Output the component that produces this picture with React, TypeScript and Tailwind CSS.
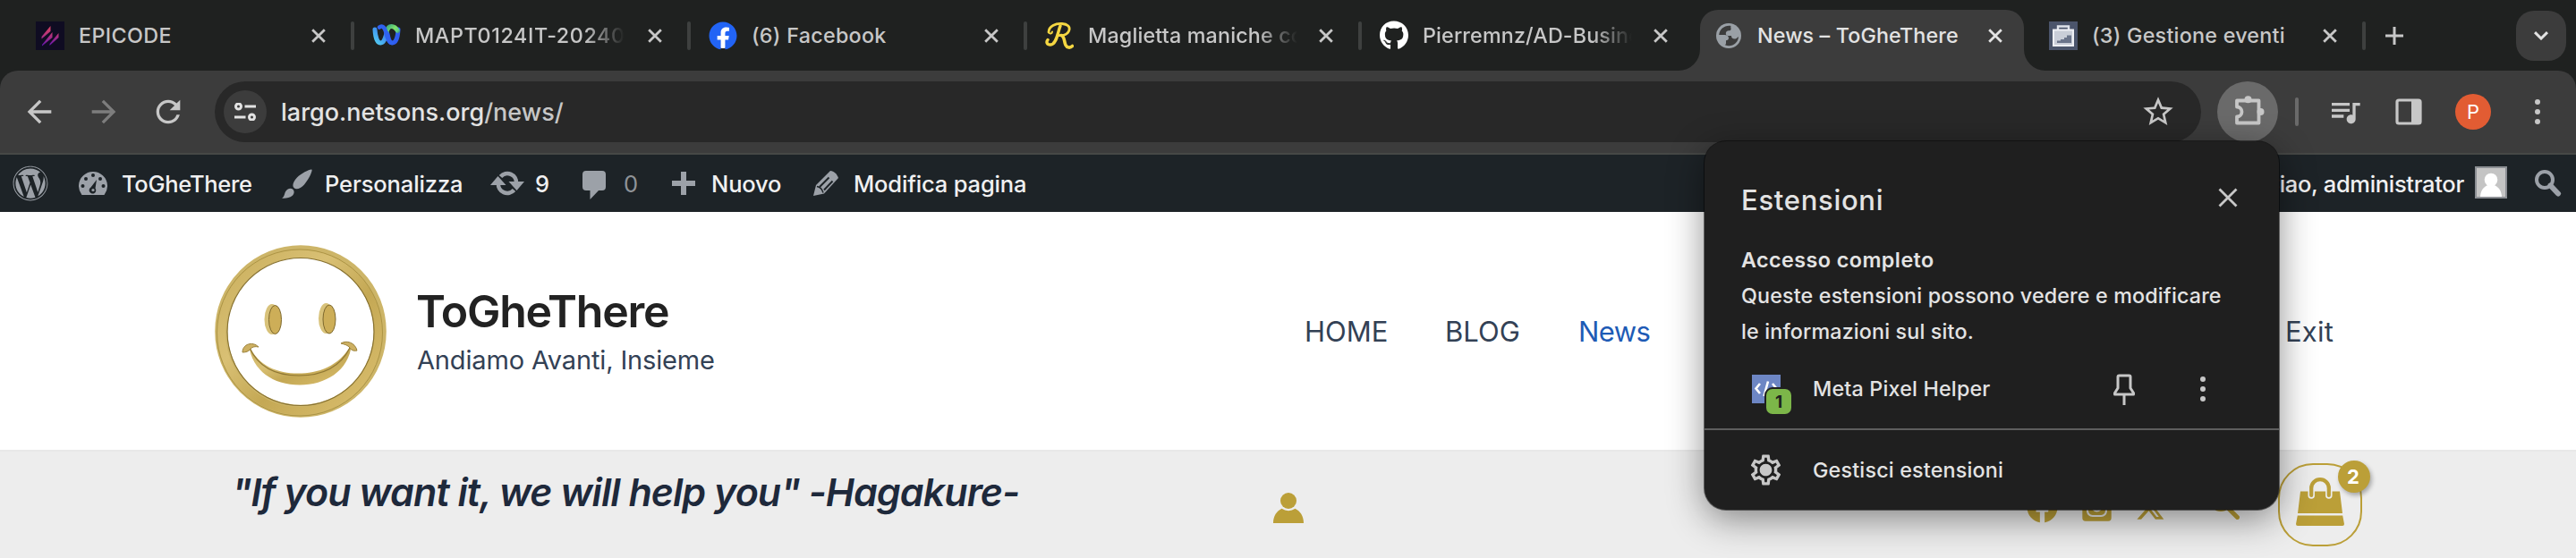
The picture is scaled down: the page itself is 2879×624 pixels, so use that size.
import React from "react";
import { FaFacebook, FaGithub, FaWordpress, FaInstagramSquare } from "react-icons/fa";
import { FaXTwitter } from "react-icons/fa6";
import {
  MdArrowBack,
  MdArrowForward,
  MdRefresh,
  MdStarOutline,
  MdQueueMusic,
  MdOutlineSettings,
} from "react-icons/md";

type IconProps = { className?: string };

const CloseIcon = ({ className }: IconProps) => (
  <svg viewBox="0 0 16 16" className={className} fill="none" stroke="currentColor" strokeWidth="2.8">
    <path d="M1.2 1.2 14.8 14.8M14.8 1.2 1.2 14.8" />
  </svg>
);

const DotsIcon = ({ className }: IconProps) => (
  <svg viewBox="0 0 8 30" className={className} fill="currentColor">
    <circle cx="4" cy="4" r="3" />
    <circle cx="4" cy="15" r="3" />
    <circle cx="4" cy="26" r="3" />
  </svg>
);

const EpicodeIcon = () => (
  <svg viewBox="0 0 32 32" className="size-8">
    <defs>
      <linearGradient id="epi" x1="0" y1="28" x2="0" y2="4" gradientUnits="userSpaceOnUse">
        <stop offset="0" stopColor="#5a12b0" />
        <stop offset="0.5" stopColor="#b0317f" />
        <stop offset="1" stopColor="#e0455c" />
      </linearGradient>
    </defs>
    <rect width="32" height="32" fill="#0f0c22" />
    <path d="M6.5 17 16.500 5v6L6.500 19.500zM7 26 18.500 12v6L7 27.500zM15.500 25 25.500 13v5L15.500 27z" fill="url(#epi)" />
  </svg>
);

const WebexIcon = () => (
  <svg viewBox="0 0 32 32" className="size-8" fill="none" strokeLinecap="round">
    <defs>
      <linearGradient id="wbl" x1="2" y1="20" x2="16" y2="6" gradientUnits="userSpaceOnUse">
        <stop offset="0" stopColor="#4fc3f0" />
        <stop offset="0.55" stopColor="#3f8df0" />
        <stop offset="1" stopColor="#2457e0" />
      </linearGradient>
      <linearGradient id="wbr" x1="18" y1="4" x2="30" y2="16" gradientUnits="userSpaceOnUse">
        <stop offset="0" stopColor="#3fae7f" />
        <stop offset="0.45" stopColor="#7fe36b" />
        <stop offset="0.7" stopColor="#5fcf80" />
        <stop offset="1" stopColor="#1f3fb0" />
      </linearGradient>
    </defs>
    <path d="M29 9c-.5 10-3 15-6.500 15S18 19 17 14" stroke="#2f5df0" strokeWidth="5" />
    <path d="M16 12c1-4.500 3-6.500 5.500-6.500S27 8 28.500 10.500" stroke="url(#wbr)" strokeWidth="5" />
    <path d="M3 9c.5 9 3 15 6.500 15s5-5 6.500-11" stroke="url(#wbl)" strokeWidth="5" />
    <path d="M8 6.500c2.500-2 5.500-1 7 4.500s3 13 7 13" stroke="#2f62f0" strokeWidth="4.600" />
  </svg>
);

const ScriptLogo = () => (
  <svg viewBox="0 0 32 32" className="size-8" fill="none" stroke="#f5d742" strokeLinecap="round">
    <path d="M17 5C14 12 13 26 6 26c-4 0-5-3-3-5.500" strokeWidth="3.400" />
    <path d="M4 12C4 5 12 2 19 2.500c6 .5 9 3 8 7C26 14 21 16 15 15.500" strokeWidth="2.800" />
    <path d="M18 15.500c4 1 3 7 5 11 1.500 3 5 3.500 7.500 1" strokeWidth="3.600" />
    <path d="M4 12c1 2.500 4 1.500 4-.5" strokeWidth="2" />
  </svg>
);

const GlobeIcon = () => (
  <svg viewBox="0 0 28 28" className="ml-0.5 size-7">
    <circle cx="14" cy="14" r="14" fill="#9aa0a6" />
    <path
      d="M16.500 3C9.500 2 4 6.500 3.200 13h6.300c3 0 4.500 1.500 4.500 4-.1 1.200-1.300 2-3 2.200V22c0 1.500-.6 2-1.200 2.300 7.500 3 15-2 15.200-9.300-1.500.8-2 2.500-4 2.500-3 0-4-1.500-4-3.500h-4.500c-2-.5-2.500-4.500.3-5.500 1.500-.5 3 .2 3.700-1.500.4-1.500-.7-2.500 0-4z"
      fill="#3c3c3c"
    />
  </svg>
);

const BriefcaseIcon = () => (
  <svg viewBox="0 0 32 32" className="size-8">
    <rect width="32" height="32" fill="#4b556b" />
    <path d="M10 10V5.500h12V10" fill="none" stroke="#dfe3ea" strokeWidth="2.400" />
    <rect x="5" y="9.500" width="22" height="17.500" fill="#c9ced8" stroke="#eef0f4" strokeWidth="2" />
    <path d="M9 24v-2.500h4v-1.500h4v-2h3v-2.500h5v8.500z" fill="#6a748a" />
  </svg>
);

type TabData = {
  title: string;
  icon: React.ReactNode;
  width: string;
  spacing: string;
  active?: boolean;
  fade?: boolean;
  separator?: boolean;
};

const tabs: TabData[] = [
  { title: "EPICODE", icon: <EpicodeIcon />, width: "w-[376px]", spacing: "tracking-[0.4px]" },
  { title: "MAPT0124IT-20240", icon: <WebexIcon />, width: "w-[376px]", spacing: "tracking-[0.6px]", fade: true, separator: true },
  {
    title: "(6) Facebook",
    icon: (
      <span className="flex size-8 items-center justify-center rounded-full bg-[radial-gradient(circle,white_60%,transparent_62%)]">
        <FaFacebook className="size-8 text-[#2264f5]" />
      </span>
    ),
    width: "w-[376px]",
    spacing: "tracking-[0.28px]",
    separator: true,
  },
  { title: "Maglietta maniche co", icon: <ScriptLogo />, width: "w-[374px]", spacing: "tracking-[0.16px]", fade: true, separator: true },
  { title: "Pierremnz/AD-Busine", icon: <FaGithub className="size-[33px] text-white" />, width: "w-[374px]", spacing: "tracking-[0.14px]", fade: true, separator: true },
  { title: "News – ToGheThere", icon: <GlobeIcon />, width: "w-[374px]", spacing: "tracking-[0.12px]", active: true },
  { title: "(3) Gestione eventi", icon: <BriefcaseIcon />, width: "w-[374px]", spacing: "tracking-[0.25px]" },
];

function Tab({ tab }: { tab: TabData }) {
  return (
    <div className={`relative flex h-full shrink-0 items-center ${tab.width}`}>
      {tab.active && (
        <svg viewBox="0 0 410 68" className="absolute bottom-0 -left-4 h-[68px] w-[410px]" fill="#3c3c3c">
          <path d="M0 68a24 24 0 0 0 24-24V20A20 20 0 0 1 44 0H366a20 20 0 0 1 20 20V44a24 24 0 0 0 24 24z" />
        </svg>
      )}
      <div className={`h-8 w-1 rounded-sm ${tab.separator ? "bg-[#3e403f]" : ""}`} />
      <div className="relative ml-5 flex w-8 shrink-0 items-center">{tab.icon}</div>
      <div
        className={`relative ml-4 w-[236px] overflow-hidden text-[23.3px] leading-8 font-medium whitespace-nowrap ${tab.spacing} ${
          tab.active ? "text-[#e3e3e3]" : "text-[#c7c7c7]"
        } ${tab.fade ? "[mask-image:linear-gradient(to_right,black_190px,transparent_234px)]" : ""}`}
      >
        {tab.title}
      </div>
      <CloseIcon className={`relative mr-7 ml-auto size-4 ${tab.active ? "text-[#e3e3e3]" : "text-[#c7c7c7]"}`} />
    </div>
  );
}

function TabStrip() {
  return (
    <div className="flex h-[79px] items-center pl-4">
      {tabs.map((tab) => (
        <Tab key={tab.title} tab={tab} />
      ))}
      <div className="h-8 w-1 rounded-sm bg-[#3e403f]" />
      <svg viewBox="0 0 22 22" className="ml-[21px] size-[22px]" stroke="#c7c7c7" strokeWidth="3">
        <path d="M11 1v20M1 11h20" />
      </svg>
      <div className="mr-[11px] ml-auto flex size-14 items-center justify-center rounded-[20px] bg-[#3c3c3c]">
        <svg viewBox="0 0 16 10" className="h-2.5 w-4" fill="none" stroke="#e3e3e3" strokeWidth="3">
          <path d="M1 1.200 8 8l7-6.800" />
        </svg>
      </div>
    </div>
  );
}

function Toolbar() {
  return (
    <div className="flex h-[94px] items-center rounded-t-[20px] border-b-2 border-[#464846] bg-[#3c3c3c] pl-6 text-[#c7c7c7]">
      <div className="flex gap-8">
        <MdArrowBack className="size-10" />
        <MdArrowForward className="size-10 text-[#7d7d7d]" />
        <MdRefresh className="size-10" />
      </div>
      <div className="ml-8 flex h-[68px] w-[2220px] items-center rounded-full bg-[#282828] pr-[28px] pl-[10px]">
        <div className="flex size-12 items-center justify-center rounded-full bg-[#3c3c3c]">
          <svg viewBox="0 0 24 20" className="h-5 w-6" fill="none" stroke="#e3e3e3" strokeWidth="3">
            <circle cx="4.500" cy="4" r="3" />
            <path d="M11.500 4H24M0 16h12.500" />
            <circle cx="19.500" cy="16" r="3" />
          </svg>
        </div>
        <div className="ml-4 pt-0.5 text-[27px] leading-8 font-medium text-[#e3e3e3]">
          largo.netsons.org<span className="text-[#c7c7c7]">/news/</span>
        </div>
        <MdStarOutline className="ml-auto size-10" />
      </div>
      <div className="ml-[18px] flex size-[68px] items-center justify-center rounded-full bg-[#6a6a6a]">
        <svg viewBox="0 0 36 36" className="mb-0.5 ml-1 size-9">
          <path d="M4 6.500H28.500V31.500H4V24.500a5.500 5.500 0 0 0 0-11Z" fill="none" stroke="currentColor" strokeWidth="3.800" strokeLinejoin="round" />
          <circle cx="16.500" cy="5.200" r="4" fill="currentColor" />
          <circle cx="30.500" cy="19" r="4" fill="currentColor" />
        </svg>
      </div>
      <div className="ml-[19px] h-8 w-1 rounded-sm bg-[#6a6a6a]" />
      <MdQueueMusic className="ml-[32px] size-10" />
      <svg viewBox="0 0 40 40" className="ml-[31px] size-10">
        <rect x="7" y="7" width="26" height="26" rx="2" fill="none" stroke="currentColor" strokeWidth="3.200" />
        <path d="M23 7h10v26H23z" fill="currentColor" />
      </svg>
      <div className="ml-8 flex size-10 items-center justify-center rounded-full bg-[#e25c33] text-[22px] text-white">P</div>
      <DotsIcon className="ml-12 h-[30px] w-2" />
    </div>
  );
}

const DashboardIcon = () => (
  <svg viewBox="0 0 32 26" className="h-[26px] w-8">
    <path d="M3.500 26A16 16 0 1 1 28.500 26z" fill="currentColor" />
    <g fill="#1d2327">
      <circle cx="16" cy="4" r="2" />
      <circle cx="8" cy="8" r="2" />
      <circle cx="24" cy="8" r="2" />
      <circle cx="4.500" cy="16" r="2" />
      <circle cx="27.500" cy="16" r="2" />
      <path d="M20 9 18.500 18.500A3.800 3.800 0 1 1 13.500 17.500z" />
    </g>
    <circle cx="16" cy="20.500" r="1.600" fill="currentColor" />
  </svg>
);

const BrushIcon = () => (
  <svg viewBox="0 0 34 33" className="h-[33px] w-[34px]" fill="currentColor">
    <path d="M33.500.8C34.500 2 30 12 25 17.500c-4 4.500-9 6-11.500 3.500S13 14 17 9.500C22 4.500 32.500-.5 33.500.8z" />
    <path d="M12 22.500c2.500 2 2 5.500-.5 7.500-3 2.500-8 3-11.500 2.500 3-1.500 2.500-4 4-7s5.500-5 8-3z" />
  </svg>
);

const UpdateIcon = () => (
  <svg viewBox="0 0 38 28" className="h-7 w-[38px]">
    <path d="M11.500 6.500A10 10 0 0 1 29 14" fill="none" stroke="currentColor" strokeWidth="4.600" />
    <path d="M26.500 21.500A10 10 0 0 1 9 14" fill="none" stroke="currentColor" strokeWidth="4.600" />
    <path d="M20.500 12H38l-8.500 10zM17.500 16H0L8.500 6z" fill="currentColor" />
  </svg>
);

const CommentIcon = () => (
  <svg viewBox="0 0 26 32" className="h-8 w-[26px]" fill="currentColor">
    <path d="M4 0h18a4 4 0 0 1 4 4v14a4 4 0 0 1-4 4h-4L8.500 32V22H4a4 4 0 0 1-4-4V4a4 4 0 0 1 4-4z" />
  </svg>
);

const PlusIcon = () => (
  <svg viewBox="0 0 26 26" className="size-[26px]" fill="currentColor">
    <path d="M10 0h6v10h10v6H16v10h-6V16H0v-6h10z" />
  </svg>
);

const PencilIcon = () => (
  <svg viewBox="0 0 28 28" className="size-7">
    <path d="M19 0c4 .5 7.500 3.500 9 8L12 25.500 0 28 3 16z" fill="currentColor" />
    <path d="M7 18 17.500 7.500M12 21.500 21.500 11.500" stroke="#1d2327" strokeWidth="2" />
    <path d="M4 17.500c3 .5 6 3.500 7 7" fill="none" stroke="#1d2327" strokeWidth="1.500" />
  </svg>
);

function AdminBar() {
  return (
    <div className="flex h-16 items-center bg-[#1d2327] pl-[14px] text-[25.5px] leading-8 font-medium text-[#f0f0f1]">
      <div className="flex w-[74px] text-[#9ca1a8]">
        <FaWordpress className="size-10" />
      </div>
      <div className="flex w-[227px] items-center text-[#9ca1a8]">
        <DashboardIcon />
        <span className="ml-4 pt-0.5 tracking-[-0.3px] text-[#f0f0f1]">ToGheThere</span>
      </div>
      <div className="flex w-[233px] items-center text-[#9ca1a8]">
        <BrushIcon />
        <span className="ml-3.5 pt-0.5 tracking-[-0.12px] text-[#f0f0f1]">Personalizza</span>
      </div>
      <div className="flex w-[103px] items-center text-[#9ca1a8]">
        <UpdateIcon />
        <span className="ml-3 pt-0.5 text-[#f0f0f1]">9</span>
      </div>
      <div className="flex w-[100px] items-center text-[#9ca1a8]">
        <span className="mt-1">
          <CommentIcon />
        </span>
        <span className="ml-5 pt-0.5 font-normal text-[#8f9398]">0</span>
      </div>
      <div className="flex w-[158px] items-center text-[#9ca1a8]">
        <PlusIcon />
        <span className="ml-[18px] pt-0.5 tracking-[-0.15px] text-[#f0f0f1]">Nuovo</span>
      </div>
      <div className="flex items-center text-[#9ca1a8]">
        <PencilIcon />
        <span className="ml-[17px] pt-0.5 tracking-[-0.17px] text-[#f0f0f1]">Modifica pagina</span>
      </div>
      <div className="ml-auto flex items-center">
        <span className="pt-0.5 tracking-[-0.32px]">Ciao, administrator</span>
        <svg viewBox="0 0 36 36" className="mb-0.5 ml-3 size-9">
          <rect x="1" y="1" width="34" height="34" fill="#c4c4c4" stroke="#8c8f94" strokeWidth="2" />
          <circle cx="18" cy="15" r="7.300" fill="#fff" />
          <path d="M6 34c.5-9 6-13.500 12-13.500S29.500 25 30 34z" fill="#fff" />
        </svg>
        <svg viewBox="0 0 30 30" className="mr-4 ml-[31px] size-[30px] text-[#9ca1a8]" fill="none" stroke="currentColor">
          <circle cx="11" cy="11" r="9" strokeWidth="4" />
          <path d="M17.500 17.500 26 26.500" strokeWidth="6" strokeLinecap="round" />
        </svg>
      </div>
    </div>
  );
}

const SmileyLogo = () => (
  <svg viewBox="0 0 192 193" className="h-[193px] w-[192px]">
    <defs>
      <linearGradient id="gold" x1="0" y1="0" x2="1" y2="1">
        <stop offset="0" stopColor="#c9ae5c" />
        <stop offset="0.35" stopColor="#d9c074" />
        <stop offset="0.6" stopColor="#c4a854" />
        <stop offset="1" stopColor="#dcc070" />
      </linearGradient>
    </defs>
    <ellipse cx="96" cy="96.500" rx="88.800" ry="89.300" fill="none" stroke="#cdb568" strokeWidth="14" />
    <ellipse cx="95" cy="97.500" rx="87.500" ry="88" fill="none" stroke="url(#gold)" strokeWidth="9" />
    <ellipse cx="96" cy="97" rx="82" ry="82.500" fill="none" stroke="#86702f" strokeWidth="1.200" />
    <ellipse cx="95" cy="98" rx="92.500" ry="93" fill="none" stroke="#a8903f" strokeWidth="0.900" />
    <ellipse cx="64" cy="83" rx="8.500" ry="17" fill="#d8c27a" />
    <ellipse cx="67.500" cy="83.500" rx="7" ry="16" fill="#cdae58" stroke="#7d682c" strokeWidth="1" />
    <ellipse cx="124.500" cy="82" rx="8.500" ry="17" fill="#d8c27a" />
    <ellipse cx="128" cy="83" rx="7" ry="16" fill="#cdae58" stroke="#7d682c" strokeWidth="1" />
    <path d="M38 112C49 136 71 143.500 93 143.500s46-7 60-33c-3 31-30 46-58 46-30 0-53-16-57-44.500z" fill="url(#gold)" />
    <path d="M39 115C50 139 72 146 94 146s45-7 57-31" fill="none" stroke="#8f7733" strokeWidth="1.200" />
    <path d="M31 120c0-9 11-13 18-6-4-1-7 0-9 2-2 3-5 4-9 4z" fill="#cdb062" stroke="#9a8038" strokeWidth="1" />
    <path d="M141 110c6-4 16-1 18 8-4 1-7-1-8-3-2-3-6-4-10-5z" fill="#cdb062" stroke="#9a8038" strokeWidth="1" />
  </svg>
);

function SiteHeader() {
  return (
    <header className="flex h-[266px] items-center bg-white pl-[240px]">
      <SmileyLogo />
      <div className="ml-[33px] flex w-[993px] flex-col pt-[5px]">
        <h1 className="text-[50px] leading-[60px] font-semibold tracking-[-1.25px] text-[#222222]">ToGheThere</h1>
        <p className="pl-px text-[29px] leading-[49px] tracking-[-0.15px] text-[#334155]">Andiamo Avanti, Insieme</p>
      </div>
      <nav className="flex pt-0.5 text-[31px] leading-10 text-[#334155]">
        <a className="w-[157px]">HOME</a>
        <a className="w-[149px]">BLOG</a>
        <a className="w-[790px] tracking-[-0.6px] text-[#1e5bb5]">News</a>
        <a className="tracking-[0.2px]">Exit</a>
      </nav>
    </header>
  );
}

function InfoBar() {
  return (
    <section className="flex h-[121px] items-start border-t-2 border-[#e8e8e8] bg-[#ededed] pl-[259px] text-[#bb9f38]">
      <p className="mt-[15px] w-[1164px] text-[43px] leading-[60px] font-semibold tracking-[-0.95px] whitespace-nowrap text-[#1e293b] italic">
        &quot;If you want it, we will help you&quot; -Hagakure-
      </p>
      <svg viewBox="0 0 34 34" className="mt-[46px] size-[34px]" fill="currentColor">
        <circle cx="17" cy="9" r="9" />
        <path d="M0 34C0 26 4 20.500 9.500 17.800a13 13 0 0 0 15 0C30 20.500 34 26 34 34z" />
      </svg>
      <FaFacebook className="mt-[45px] ml-[808px] size-[35px]" />
      <FaInstagramSquare className="mt-[43px] ml-[25px] size-[37px]" />
      <FaXTwitter className="mt-[45px] ml-[24px] size-[34px]" />
      <svg viewBox="0 0 34 34" className="mt-[42px] ml-[49px] size-[34px]" fill="none" stroke="currentColor">
        <circle cx="13" cy="13" r="10" strokeWidth="4" />
        <path d="M21 21 31.500 31.500" strokeWidth="5" strokeLinecap="round" />
      </svg>
      <div className="relative mt-[13px] ml-[43px] flex h-[93px] w-[94px] items-center justify-center rounded-[39px] border-2 border-[#bb9f38]">
        <svg viewBox="0 0 54 54" className="mt-[-7px] size-[54px]" fill="currentColor">
          <path d="M5 15.500H49L52 40H2zM1.800 42.500H52.200L54 52a2 2 0 0 1-2 2H2a2 2 0 0 1-2-2z" />
          <path d="M17.200 20V12a9.800 9.800 0 0 1 19.600 0v8" fill="none" stroke="#ededed" strokeWidth="7.500" strokeLinecap="round" />
          <path d="M17.200 20V12a9.800 9.800 0 0 1 19.600 0v8" fill="none" stroke="currentColor" strokeWidth="4.200" strokeLinecap="round" />
        </svg>
        <span className="absolute -top-[5px] left-[65px] flex size-9 items-center justify-center rounded-full bg-[#bb9f38] pr-0.5 text-[22px] font-bold text-white shadow-[2px_3px_5px_rgba(0,0,0,0.3)]">
          2
        </span>
      </div>
    </section>
  );
}

function ExtensionsPopup() {
  return (
    <div className="absolute top-[158px] left-[1905px] h-[412px] w-[642px] rounded-[24px] bg-[#1f1f1f] text-[#e3e3e3] shadow-[0_0_0_1px_rgba(0,0,0,0.5),0_10px_40px_rgba(0,0,0,0.45)]">
      <div className="flex h-[113px] items-start justify-between pt-[46px] pr-[46px] pl-[41px]">
        <h2 className="text-[31px] leading-10 font-medium tracking-[0.7px]">Estensioni</h2>
        <svg viewBox="0 0 22 22" className="mt-[6px] size-[22px]" fill="none" stroke="#c7c7c7" strokeWidth="2.800">
          <path d="M1.500 1.500 20.500 20.500M20.500 1.500 1.500 20.500" />
        </svg>
      </div>
      <div className="pl-[41px] text-[23.3px] leading-10 font-medium whitespace-nowrap">
        <p className="font-semibold tracking-[0.45px]">Accesso completo</p>
        <p className="tracking-[0.15px]">
          Queste estensioni possono vedere e modificare
          <br />
          le informazioni sul sito.
        </p>
      </div>
      <div className="flex h-[88px] items-center pl-[53px] text-[23.3px] leading-10 font-medium">
        <div className="relative size-8 shrink-0 bg-[#6d86c4]">
          <svg viewBox="0 0 32 32" className="size-8" fill="none" stroke="#fff" strokeWidth="2.600">
            <path d="M9 10 4.500 15.500 9 21M23 10l4.500 5.500L23 21M18 7.500 13.500 24" />
          </svg>
          <span className="absolute top-[14px] left-[14px] flex h-8 w-8 items-center justify-center rounded-[9px] border-2 border-[#1f1f1f] bg-[#7cb649] text-[19px] leading-none font-bold text-[#1f1f1f]">
            1
          </span>
        </div>
        <span className="ml-9 w-[335px] tracking-[0.18px]">Meta Pixel Helper</span>
        <svg viewBox="0 0 26 35" className="h-[35px] w-[26px]" fill="none" stroke="#c7c7c7" strokeWidth="3" strokeLinejoin="round">
          <path d="M7.500 2h11a1.500 1.500 0 0 1 1.500 1.500V16l3.500 5.500V23h-21v-1.500L6 16V3.500A1.500 1.500 0 0 1 7.500 2zM13 23v12" />
        </svg>
        <DotsIcon className="ml-[71px] h-[30px] w-2 text-[#c7c7c7]" />
      </div>
      <div className="flex h-[91px] items-center border-t-2 border-[#5e5e5e] pl-[48px] text-[23.3px] leading-10 font-medium">
        <svg viewBox="0 0 24 24" className="size-[41px] text-[#c7c7c7]" fill="currentColor">
          <MdOutlineSettings size={24} />
          <circle cx="12" cy="12" r="3.800" />
        </svg>
        <span className="ml-8 tracking-[0.19px]">Gestisci estensioni</span>
      </div>
    </div>
  );
}

export default function App() {
  return (
    <div className="relative h-[624px] w-[2879px] overflow-hidden bg-[#1f2120] font-['Inter','Liberation_Sans',sans-serif]">
      <TabStrip />
      <Toolbar />
      <AdminBar />
      <SiteHeader />
      <InfoBar />
      <ExtensionsPopup />
    </div>
  );
}
